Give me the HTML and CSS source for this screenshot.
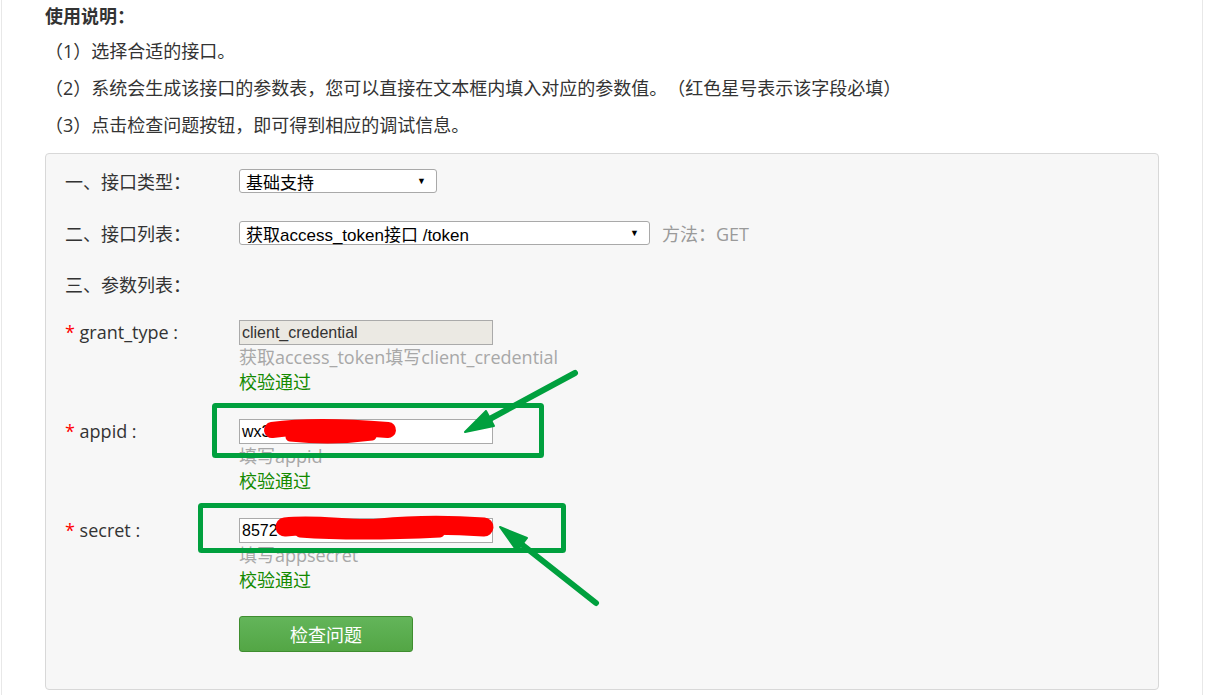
FILE: index.html
```html
<!DOCTYPE html>
<html lang="zh-CN">
<head>
<meta charset="utf-8">
<title>使用说明</title>
<link rel="stylesheet" href="styles.css">
</head>
<body>
<div class="page">
  <div class="content">
    <h3 class="title">使用说明：</h3>
    <p class="step">（1）选择合适的接口。</p>
    <p class="step">（2）系统会生成该接口的参数表，您可以直接在文本框内填入对应的参数值。（红色星号表示该字段必填）</p>
    <p class="step">（3）点击检查问题按钮，即可得到相应的调试信息。</p>

    <div class="panel">
      <div class="row row-sel">
        <span class="label">一、接口类型：</span>
        <div class="select sel-type"><span class="sel-text">基础支持</span><span class="sel-arrow">▼</span></div>
      </div>
      <div class="row row-sel row-list">
        <span class="label">二、接口列表：</span>
        <div class="select sel-api"><span class="sel-text">获取access_token接口 /token</span><span class="sel-arrow">▼</span></div>
        <span class="method">方法：GET</span>
      </div>
      <div class="row row-params">
        <span class="label">三、参数列表：</span>
      </div>

      <div class="param">
        <span class="plabel"><span class="req">*</span> grant_type :</span>
        <div class="field">
          <div class="input disabled">client_credential</div>
          <div class="help">获取access_token填写client_credential</div>
          <div class="ok">校验通过</div>
        </div>
      </div>
      <div class="param">
        <span class="plabel"><span class="req">*</span> appid :</span>
        <div class="field">
          <div class="input">wx3</div>
          <div class="help">填写appid</div>
          <div class="ok">校验通过</div>
        </div>
      </div>
      <div class="param">
        <span class="plabel"><span class="req">*</span> secret :</span>
        <div class="field">
          <div class="input">8572</div>
          <div class="help">填写appsecret</div>
          <div class="ok">校验通过</div>
        </div>
      </div>
      <div class="actions">
        <button class="btn" type="button">检查问题</button>
      </div>
    </div>
  </div>
</div>

<svg class="annot" width="1205" height="695" viewBox="0 0 1205 695" xmlns="http://www.w3.org/2000/svg">
  <g fill="none" stroke="#ff0000" stroke-linecap="round" stroke-linejoin="round">
    <path d="M272 430 C 300 426, 340 426, 388 430" stroke-width="16"/>
    <path d="M290 437 C 320 440, 350 439, 372 436" stroke-width="9"/>
    <path d="M285 527 C 320 523, 350 531, 380 528 S 440 524, 484 527" stroke-width="19"/>
    <path d="M300 533 C 340 536, 400 535, 440 533" stroke-width="9"/>
  </g>
  <g fill="none" stroke="#00a03e" stroke-width="5" stroke-linejoin="round">
    <rect x="214.5" y="405.5" width="327" height="50" rx="1"/>
    <rect x="200.5" y="505.5" width="363" height="45" rx="1"/>
  </g>
  <g stroke="#00a03e" stroke-width="6" stroke-linecap="round" fill="#00a03e">
    <line x1="575" y1="373" x2="486" y2="421"/>
    <polygon points="465,432 494,426 486,411" stroke-width="2" stroke-linejoin="round"/>
    <line x1="596" y1="603" x2="520" y2="543"/>
    <polygon points="500,527 517,551 527,538" stroke-width="2" stroke-linejoin="round"/>
  </g>
</svg>
</body>
</html>
```

FILE: styles.css
```css
html, body {
  margin: 0;
  padding: 0;
  background: #ffffff;
}

body {
  position: relative;
  width: 1205px;
  height: 695px;
  overflow: hidden;
  font-family: "Open Sans", "Noto Sans CJK SC", sans-serif;
  font-size: 18px;
  color: #333333;
  text-spacing-trim: space-all;
}

.page {
  box-sizing: border-box;
  margin-left: 1px;
  width: 1202px;
  height: 695px;
  border-left: 1px solid #e8e8e8;
  border-right: 1px solid #e8e8e8;
}

.content {
  padding-left: 43px;
}

.title {
  margin: 0;
  height: 33px;
  line-height: 32px;
  font-size: 18px;
  font-weight: bold;
  color: #333333;
}

.step {
  margin: 0;
  line-height: 37px;
  height: 37px;
  color: #333333;
  white-space: nowrap;
}

.panel {
  box-sizing: border-box;
  margin-top: 9px;
  width: 1114px;
  height: 537px;
  border: 1px solid #d8d8d8;
  border-radius: 4px;
  background: #f7f7f7;
  padding: 15px 19px 0 19px;
}

.row {
  display: flex;
  align-items: center;
  height: 24px;
}

.row-sel {
  margin-bottom: 28px;
}

.row-list {
  margin-bottom: 27px;
}

.row-params {
  margin-bottom: 24px;
}

.label {
  width: 174px;
  flex: none;
  color: #333333;
}

.select {
  box-sizing: border-box;
  height: 24px;
  border: 1px solid #a9a9a9;
  border-radius: 3px;
  background: #ffffff;
  display: flex;
  align-items: center;
  padding: 0 10px 0 6px;
  font-family: "Liberation Sans", "Noto Sans CJK SC", sans-serif;
  font-size: 17px;
  color: #000000;
}

.sel-text {
  flex: 1;
  white-space: nowrap;
}

.sel-arrow {
  font-size: 9px;
  color: #000000;
}

.sel-type {
  width: 198px;
}

.sel-api {
  width: 411px;
}

.method {
  margin-left: 12px;
  color: #9a9a9a;
}

.param {
  display: flex;
  align-items: flex-start;
  margin-bottom: 24px;
}

.plabel {
  width: 174px;
  flex: none;
  line-height: 25px;
  color: #333333;
}

.req {
  color: #ff0000;
}

.field {
  display: flex;
  flex-direction: column;
}

.input {
  box-sizing: border-box;
  width: 254px;
  height: 25px;
  border: 1px solid #aaaaaa;
  background: #ffffff;
  padding: 0 2px;
  line-height: 23px;
  font-family: "Liberation Sans", sans-serif;
  font-size: 16px;
  color: #000000;
}

.input.disabled {
  background: #ebe9e3;
  color: #333333;
}

.help {
  line-height: 25px;
  height: 25px;
  color: #a8a8a8;
  white-space: nowrap;
}

.ok {
  line-height: 25px;
  height: 25px;
  color: #138a00;
}

.actions {
  padding-left: 174px;
  margin-top: -1px;
}

.btn {
  box-sizing: border-box;
  width: 174px;
  height: 36px;
  border: 1px solid #3f8d2f;
  border-radius: 3px;
  background: linear-gradient(#63b55a, #53a645);
  color: #ffffff;
  font-family: "Noto Sans CJK SC", sans-serif;
  font-size: 18px;
  cursor: pointer;
  padding: 0;
}

.annot {
  position: absolute;
  left: 0;
  top: 0;
  pointer-events: none;
}
```
